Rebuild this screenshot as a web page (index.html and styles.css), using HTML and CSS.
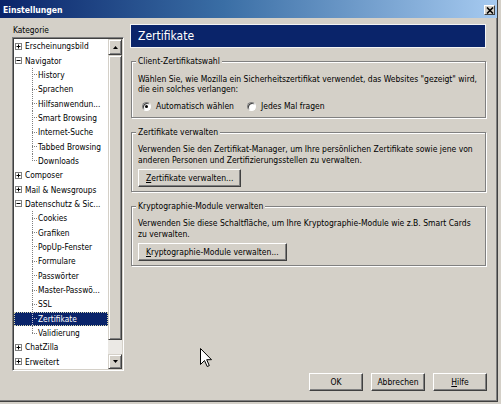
FILE: index.html
```html
<!DOCTYPE html>
<html lang="de">
<head>
<meta charset="utf-8">
<title>Einstellungen</title>
<link rel="stylesheet" href="styles.css">
</head>
<body>
<div class="window">
  <div class="titlebar">
    <span class="title">Einstellungen</span>
    <span class="close"><svg width="8" height="7" viewBox="0 0 8 7"><path d="M1 0.5l6 6M7 0.5l-6 6" stroke="#000" stroke-width="1.6"/></svg></span>
  </div>
  <div class="main">
    <div class="left">
      <div class="kat">Kategorie</div>
      <div class="listbox">
        <div class="tree">
          <div class="row top"><svg class="tw" width="7" height="7" viewBox="0 0 7 7"><rect x=".5" y=".5" width="6" height="6" fill="#fff" stroke="#808080"/><path d="M1.5 3.5h4M3.5 1.5v4" stroke="#000"/></svg><span class="lbl">Erscheinungsbild</span></div>
          <div class="row top"><svg class="tw" width="7" height="7" viewBox="0 0 7 7"><rect x=".5" y=".5" width="6" height="6" fill="#fff" stroke="#808080"/><path d="M1.5 3.5h4" stroke="#000"/></svg><span class="lbl">Navigator</span></div>
          <div class="row child"><span class="lines"></span><span class="lbl">History</span></div>
          <div class="row child"><span class="lines"></span><span class="lbl">Sprachen</span></div>
          <div class="row child"><span class="lines"></span><span class="lbl">Hilfsanwendun...</span></div>
          <div class="row child"><span class="lines"></span><span class="lbl">Smart Browsing</span></div>
          <div class="row child"><span class="lines"></span><span class="lbl">Internet-Suche</span></div>
          <div class="row child"><span class="lines"></span><span class="lbl">Tabbed Browsing</span></div>
          <div class="row child last"><span class="lines"></span><span class="lbl">Downloads</span></div>
          <div class="row top"><svg class="tw" width="7" height="7" viewBox="0 0 7 7"><rect x=".5" y=".5" width="6" height="6" fill="#fff" stroke="#808080"/><path d="M1.5 3.5h4M3.5 1.5v4" stroke="#000"/></svg><span class="lbl">Composer</span></div>
          <div class="row top"><svg class="tw" width="7" height="7" viewBox="0 0 7 7"><rect x=".5" y=".5" width="6" height="6" fill="#fff" stroke="#808080"/><path d="M1.5 3.5h4M3.5 1.5v4" stroke="#000"/></svg><span class="lbl">Mail &amp; Newsgroups</span></div>
          <div class="row top"><svg class="tw" width="7" height="7" viewBox="0 0 7 7"><rect x=".5" y=".5" width="6" height="6" fill="#fff" stroke="#808080"/><path d="M1.5 3.5h4" stroke="#000"/></svg><span class="lbl">Datenschutz &amp; Sic...</span></div>
          <div class="row child"><span class="lines"></span><span class="lbl">Cookies</span></div>
          <div class="row child"><span class="lines"></span><span class="lbl">Grafiken</span></div>
          <div class="row child"><span class="lines"></span><span class="lbl">PopUp-Fenster</span></div>
          <div class="row child"><span class="lines"></span><span class="lbl">Formulare</span></div>
          <div class="row child"><span class="lines"></span><span class="lbl">Passwörter</span></div>
          <div class="row child"><span class="lines"></span><span class="lbl">Master-Passwö...</span></div>
          <div class="row child"><span class="lines"></span><span class="lbl">SSL</span></div>
          <div class="row child sel"><span class="lines"></span><span class="lbl">Zertifikate</span></div>
          <div class="row child last"><span class="lines"></span><span class="lbl">Validierung</span></div>
          <div class="row top"><svg class="tw" width="7" height="7" viewBox="0 0 7 7"><rect x=".5" y=".5" width="6" height="6" fill="#fff" stroke="#808080"/><path d="M1.5 3.5h4M3.5 1.5v4" stroke="#000"/></svg><span class="lbl">ChatZilla</span></div>
          <div class="row top"><svg class="tw" width="7" height="7" viewBox="0 0 7 7"><rect x=".5" y=".5" width="6" height="6" fill="#fff" stroke="#808080"/><path d="M1.5 3.5h4M3.5 1.5v4" stroke="#000"/></svg><span class="lbl">Erweitert</span></div>
        </div>
        <div class="vscroll">
          <div class="sbtn up"><svg width="5" height="3" viewBox="0 0 5 3"><path d="M2.5 0L5 3H0z" fill="#000"/></svg></div>
          <div class="thumb"></div>
          <div class="track"></div>
          <div class="sbtn down"><svg width="5" height="3" viewBox="0 0 5 3"><path d="M0 0h5L2.5 3z" fill="#000"/></svg></div>
        </div>
      </div>
    </div>
    <div class="right">
      <div class="header">Zertifikate</div>
      <fieldset class="group g1">
        <legend>Client-Zertifikatswahl</legend>
        <p class="desc">Wählen Sie, wie Mozilla ein Sicherheitszertifikat verwendet, das Websites "gezeigt" wird,<br>die ein solches verlangen:</p>
        <div class="radios">
          <span class="radio"><span class="rb checked"></span>Automatisch wählen</span>
          <span class="radio"><span class="rb"></span>Jedes Mal fragen</span>
        </div>
      </fieldset>
      <fieldset class="group">
        <legend>Zertifikate verwalten</legend>
        <p class="desc">Verwenden Sie den Zertifikat-Manager, um Ihre persönlichen Zertifikate sowie jene von<br>anderen Personen und Zertifizierungsstellen zu verwalten.</p>
        <button class="btn wide"><u>Z</u>ertifikate verwalten...</button>
      </fieldset>
      <fieldset class="group">
        <legend>Kryptographie-Module verwalten</legend>
        <p class="desc">Verwenden Sie diese Schaltfläche, um Ihre Kryptographie-Module wie z.B. Smart Cards<br>zu verwalten.</p>
        <button class="btn wide"><u>K</u>ryptographie-Module verwalten...</button>
      </fieldset>
    </div>
  </div>
  <div class="footer">
    <button class="btn fixed">OK</button>
    <button class="btn fixed">Abbrechen</button>
    <button class="btn fixed"><u>H</u>ilfe</button>
  </div>
  <svg class="cursor" width="12" height="19" viewBox="0 0 12 19"><path d="M0.5 0.5V16.5L4.5 12.5L7.2 18.5L9.3 17.6L6.7 11.7H11.5Z" fill="#fff" stroke="#000" stroke-width="1" stroke-linejoin="miter"/></svg>
</div>
</body>
</html>
```

FILE: styles.css
```css
html, body {
  margin: 0;
  padding: 0;
}
body {
  width: 501px;
  height: 404px;
  overflow: hidden;
  background: #d4d0c8;
  font-family: "DejaVu Sans Condensed", "DejaVu Sans", sans-serif;
  font-stretch: semi-condensed;
  font-size: 8.5px;
  color: #000;
}
.window {
  position: relative;
  width: 498px;
  height: 402px;
  box-sizing: border-box;
  border-right: 1px solid #404040;
  border-bottom: 1px solid #404040;
  box-shadow: inset -1px -1px 0 #808080;
  display: flex;
  flex-direction: column;
  background: #d4d0c8;
}
.titlebar {
  height: 18px;
  box-sizing: border-box;
  padding: 2px 2px 0 3px;
  display: flex;
  align-items: center;
  justify-content: space-between;
  background: linear-gradient(to right, #0a246a 0%, #3a6ea5 45%, #a6caf0 100%);
}
.title {
  color: #fff;
  font-weight: bold;
  font-size: 8.6px;
}
.close {
  width: 11px;
  height: 10px;
  box-sizing: border-box;
  background: #d4d0c8;
  border: 1px solid;
  border-color: #fff #404040 #404040 #fff;
  display: flex;
  align-items: center;
  justify-content: center;
}
.close svg { display: block; }
.main {
  display: flex;
  gap: 6px;
  padding: 6px 0 0 12px;
}
.left {
  width: 112px;
  flex: none;
  font-size: 8.3px;
}
.kat {
  height: 13px;
  line-height: 13px;
  padding-left: 1px;
}
.listbox {
  width: 112px;
  height: 334px;
  box-sizing: border-box;
  border: 1px solid;
  border-color: #808080 #fff #fff #808080;
  padding: 1px;
  box-shadow: inset 1px 1px 0 #404040, inset -1px -1px 0 #d4d0c8;
  display: flex;
}
.tree {
  width: 94px;
  height: 330px;
  background: #fff;
  overflow: hidden;
}
.row {
  height: 14.35px;
  display: flex;
  align-items: center;
  white-space: nowrap;
  overflow: hidden;
}
.tw {
  flex: none;
  display: block;
  margin-left: 1px;
  margin-right: 3px;
}
.lines {
  flex: none;
  align-self: stretch;
  width: 5px;
  margin-left: 18px;
  margin-right: 1px;
  background:
    repeating-linear-gradient(to bottom, #808080 0 1px, transparent 1px 2px) left top / 1px 100% no-repeat,
    repeating-linear-gradient(to right, #808080 0 1px, transparent 1px 2px) left center / 100% 1px no-repeat;
}
.last .lines {
  background-size: 1px 50%, 100% 1px;
}
.row.sel {
  background-color: #0a246a;
  color: #fff;
  outline: 1px dotted #d8d8b0;
  outline-offset: -1px;
}
.row.sel .lines {
  background:
    repeating-linear-gradient(to bottom, #c0c0d0 0 1px, transparent 1px 2px) left top / 1px 100% no-repeat,
    repeating-linear-gradient(to right, #c0c0d0 0 1px, transparent 1px 2px) left center / 100% 1px no-repeat;
}
.vscroll {
  width: 14px;
  height: 330px;
  display: flex;
  flex-direction: column;
}
.sbtn, .thumb {
  box-sizing: border-box;
  background: #d4d0c8;
  border: 1px solid;
  border-color: #d4d0c8 #404040 #404040 #d4d0c8;
  box-shadow: inset 1px 1px 0 #fff, inset -1px -1px 0 #808080;
}
.sbtn {
  display: flex;
  align-items: center;
  justify-content: center;
}
.sbtn svg { display: block; }
.up { height: 16px; }
.thumb { height: 285px; }
.track {
  height: 14px;
  background: #ebe9e5;
}
.down { height: 15px; }
.right {
  width: 356px;
  flex: none;
}
.header {
  height: 24px;
  box-sizing: border-box;
  border: 1px solid #f4f4f4;
  background: #0a246a;
  color: #fff;
  font-size: 12px;
  line-height: 22px;
  padding-left: 7px;
}
.group {
  margin: 8px 0 0 1px;
  padding: 6.5px 2px 4px 6px;
  border: 1px solid #808080;
  box-shadow: inset 1px 1px 0 #fff, 1px 1px 0 #fff;
  min-width: 0;
}
.group + .group {
  margin-top: 9px;
}
.group legend {
  padding: 0 2px;
  margin-left: -2px;
  line-height: 11px;
  background: #d4d0c8;
}
.desc {
  margin: 0;
  line-height: 10.5px;
}
.radios {
  display: flex;
  align-items: center;
  height: 13px;
  margin-top: 5px;
  padding-left: 4px;
}
.radio {
  display: flex;
  align-items: center;
  margin-right: 13px;
}
.rb {
  width: 9px;
  height: 9px;
  box-sizing: border-box;
  border-radius: 50%;
  border: 1px solid;
  border-color: #808080 #fff #fff #808080;
  background: #fff;
  box-shadow: inset 1px 1px 0 #404040;
  margin-right: 5px;
  display: flex;
  align-items: center;
  justify-content: center;
}
.rb.checked::after {
  content: "";
  width: 3px;
  height: 3px;
  border-radius: 50%;
  background: #000;
}
.btn {
  display: block;
  height: 18px;
  box-sizing: border-box;
  margin: 0;
  padding: 0 7px;
  font: inherit;
  color: #000;
  background: #d4d0c8;
  border: 1px solid;
  border-color: #fff #404040 #404040 #fff;
  box-shadow: inset -1px -1px 0 #808080;
  border-radius: 0;
}
.btn.wide {
  margin-top: 3.5px;
}
.footer {
  display: flex;
  justify-content: flex-end;
  gap: 8px;
  padding: 2px 10px 0 0;
}
.btn.fixed {
  width: 54px;
  padding: 0;
}
.cursor {
  position: absolute;
  left: 200px;
  top: 348px;
}
```
